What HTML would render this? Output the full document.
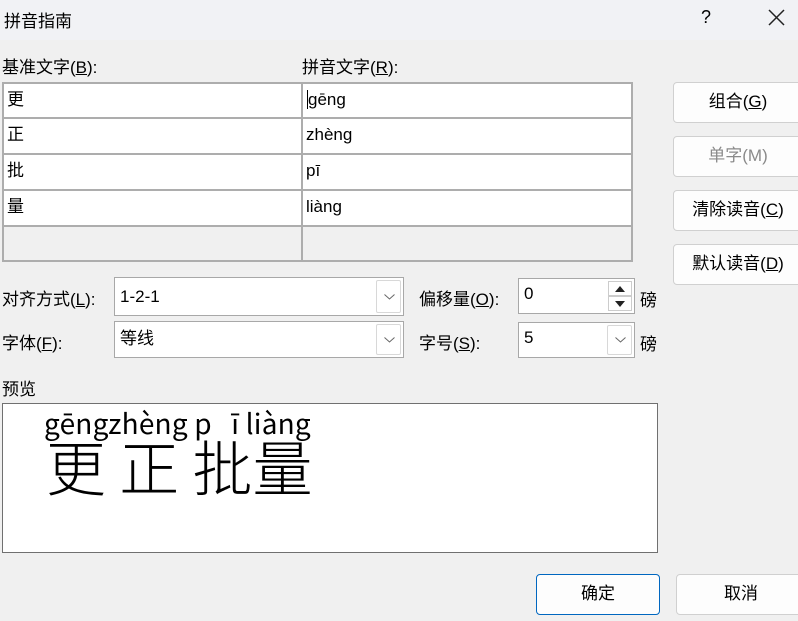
<!DOCTYPE html>
<html><head><meta charset="utf-8"><style>
*{box-sizing:border-box;margin:0;padding:0}
body{width:798px;height:621px;background:#f0f0f0;font-family:"Liberation Sans","Noto Sans CJK SC",sans-serif;font-size:17px;color:#000;position:relative;overflow:hidden}
.a{position:absolute;white-space:nowrap}
.title{left:0;top:0;width:798px;height:40px;background:#f1f2f5}
.cell{position:absolute;background:#fff;border:2px solid #adadad;padding-left:3px;line-height:31px;font-size:17px}
.btn{position:absolute;background:#fdfdfd;border:1px solid #d0d0d0;border-radius:4px;text-align:center;line-height:38px;font-size:17px}
.box{position:absolute;background:#fff;border:1px solid #a8a8a8;padding-left:5px;font-size:17px}
.dd{position:absolute;right:2px;top:2px;bottom:2px;width:25px;border:1px solid #d8d8d8;border-radius:2px;background:#fff}
.dd svg{position:absolute;left:7px;top:50%;margin-top:-3px}
u{text-decoration:underline}
</style></head><body>
<div class="a title"></div>
<div class="a" style="left:4px;top:7px;font-size:17px">拼音指南</div>
<div class="a" style="left:701px;top:7px;font-size:18px">?</div>
<svg class="a" style="left:768px;top:9px" width="17" height="17"><path d="M1 1L16 16M16 1L1 16" stroke="#222" stroke-width="1.5"/></svg>

<div class="a" style="left:2px;top:53px">基准文字(<u>B</u>):</div>
<div class="a" style="left:302px;top:53px">拼音文字(<u>R</u>):</div>

<div class="cell" style="left:2px;top:82px;width:301px;height:37px">更</div>
<div class="cell" style="left:301px;top:82px;width:332px;height:37px"><span style="border-left:1px solid #000;margin-left:1px"></span>gēng</div>
<div class="cell" style="left:2px;top:117px;width:301px;height:38px">正</div>
<div class="cell" style="left:301px;top:117px;width:332px;height:38px">zhèng</div>
<div class="cell" style="left:2px;top:153px;width:301px;height:38px">批</div>
<div class="cell" style="left:301px;top:153px;width:332px;height:38px">pī</div>
<div class="cell" style="left:2px;top:189px;width:301px;height:38px">量</div>
<div class="cell" style="left:301px;top:189px;width:332px;height:38px">liàng</div>
<div class="cell" style="left:2px;top:225px;width:301px;height:37px;background:#f0f0f0"></div>
<div class="cell" style="left:301px;top:225px;width:332px;height:37px;background:#f0f0f0"></div>

<div class="btn" style="left:673px;top:82px;width:130px;height:41px">组合(<u>G</u>)</div>
<div class="btn" style="left:673px;top:136px;width:130px;height:41px;color:#8a8a8a">单字(M)</div>
<div class="btn" style="left:673px;top:190px;width:130px;height:41px">清除读音(<u>C</u>)</div>
<div class="btn" style="left:673px;top:244px;width:130px;height:41px">默认读音(<u>D</u>)</div>

<div class="a" style="left:2px;top:285px">对齐方式(<u>L</u>):</div>
<div class="box" style="left:114px;top:277px;width:290px;height:39px;line-height:37px">1-2-1<div class="dd"><svg width="11" height="6"><path d="M0.5 0.5L5.5 5L10.5 0.5" fill="none" stroke="#666"/></svg></div></div>
<div class="a" style="left:2px;top:329px">字体(<u>F</u>):</div>
<div class="box" style="left:114px;top:321px;width:290px;height:37px;line-height:33px">等线<div class="dd"><svg width="11" height="6"><path d="M0.5 0.5L5.5 5L10.5 0.5" fill="none" stroke="#666"/></svg></div></div>

<div class="a" style="left:419px;top:285px">偏移量(<u>O</u>):</div>
<div class="box" style="left:518px;top:278px;width:117px;height:36px;line-height:30px">0
<div style="position:absolute;right:2px;top:2px;width:24px;height:15px;border:1px solid #ccc;background:#fff"><svg style="position:absolute;left:6px;top:4px" width="10" height="6"><path d="M5 0L10 6H0Z" fill="#222"/></svg></div>
<div style="position:absolute;right:2px;top:17px;width:24px;height:15px;border:1px solid #ccc;background:#fff"><svg style="position:absolute;left:6px;top:4px" width="10" height="6"><path d="M0 0H10L5 6Z" fill="#222"/></svg></div></div>
<div class="a" style="left:640px;top:286px">磅</div>
<div class="a" style="left:419px;top:329px">字号(<u>S</u>):</div>
<div class="box" style="left:518px;top:322px;width:117px;height:36px;line-height:30px">5<div class="dd"><svg width="11" height="6"><path d="M0.5 0.5L5.5 5L10.5 0.5" fill="none" stroke="#666"/></svg></div></div>
<div class="a" style="left:640px;top:330px">磅</div>

<div class="a" style="left:2px;top:375px">预览</div>
<div class="a" style="left:2px;top:403px;width:656px;height:150px;background:#fff;border:1px solid #707070"></div>
<div class="a" style="left:44px;top:406px;font-size:28px;font-family:'Noto Sans CJK SC','Liberation Sans',sans-serif;line-height:34px;letter-spacing:0.2px">gēngzhèng p&nbsp;&nbsp;&nbsp;ī liàng</div>
<div class="a" style="left:46px;top:428px;font-size:60px;font-family:'Noto Sans CJK SC',sans-serif;line-height:76px;font-weight:300">更 正 批量</div>

<div class="btn" style="left:536px;top:574px;width:124px;height:41px;border-color:#0067c0">确定</div>
<div class="btn" style="left:676px;top:574px;width:130px;height:41px">取消</div>
</body></html>
